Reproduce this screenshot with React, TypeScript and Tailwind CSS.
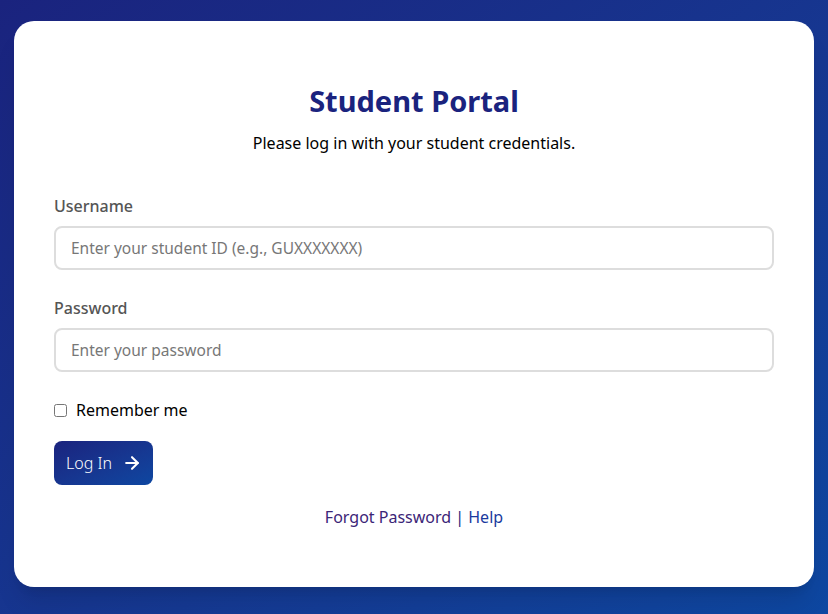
import { ArrowRight } from 'lucide-react';

function App() {
  return (
    <div
      className="h-[614px] w-full overflow-hidden bg-gradient-to-br from-[#1a237e] to-[#0d47a1] pt-[21px]"
      style={{ fontFamily: '"Noto Sans", "Open Sans", sans-serif' }}
    >
      <div className="mx-auto flex h-[566px] w-[800px] flex-col rounded-[20px] bg-white px-10 pt-[61px] shadow-xl">
        <h1 className="text-center text-[29px] font-bold leading-[38px] text-[#1a237e]">Student Portal</h1>
        <p className="mt-[11px] text-center text-[16px] leading-6 text-black">
          Please log in with your student credentials.
        </p>

        <label className="mt-[39px] text-[16px] font-medium leading-6 text-[#555]">Username</label>
        <input
          type="text"
          placeholder="Enter your student ID (e.g., GUXXXXXXX)"
          className="mt-2 h-[44px] w-full rounded-lg border-2 border-[#ddd] px-[15px] text-[15.5px] text-[#333] outline-none placeholder:text-[#777]"
        />

        <label className="mt-[26px] text-[16px] font-medium leading-6 text-[#555]">Password</label>
        <input
          type="password"
          placeholder="Enter your password"
          className="mt-2 h-[44px] w-full rounded-lg border-2 border-[#ddd] px-[15px] text-[15.5px] text-[#333] outline-none placeholder:text-[#777]"
        />

        <label className="mt-[26px] flex items-center gap-[9px] text-[16px] leading-6 text-black">
          <input type="checkbox" className="h-[13px] w-[13px] accent-[#1a237e]" />
          Remember me
        </label>

        <div className="mt-[19px]">
          <button className="flex h-[44px] w-[99px] items-center gap-[10px] rounded-lg bg-gradient-to-br from-[#1a237e] to-[#0d47a1] pl-3 text-[16px] font-light text-white">
            Log In
            <ArrowRight size={20} strokeWidth={2.5} />
          </button>
        </div>

        <p className="mt-[20px] text-center text-[16px] leading-6 text-[#1a237e]">
          <a href="#" className="text-[#3b2577]">Forgot Password</a> | <a href="#" className="text-[#1a3a9e]">Help</a>
        </p>
      </div>
    </div>
  );
}

export default App;
